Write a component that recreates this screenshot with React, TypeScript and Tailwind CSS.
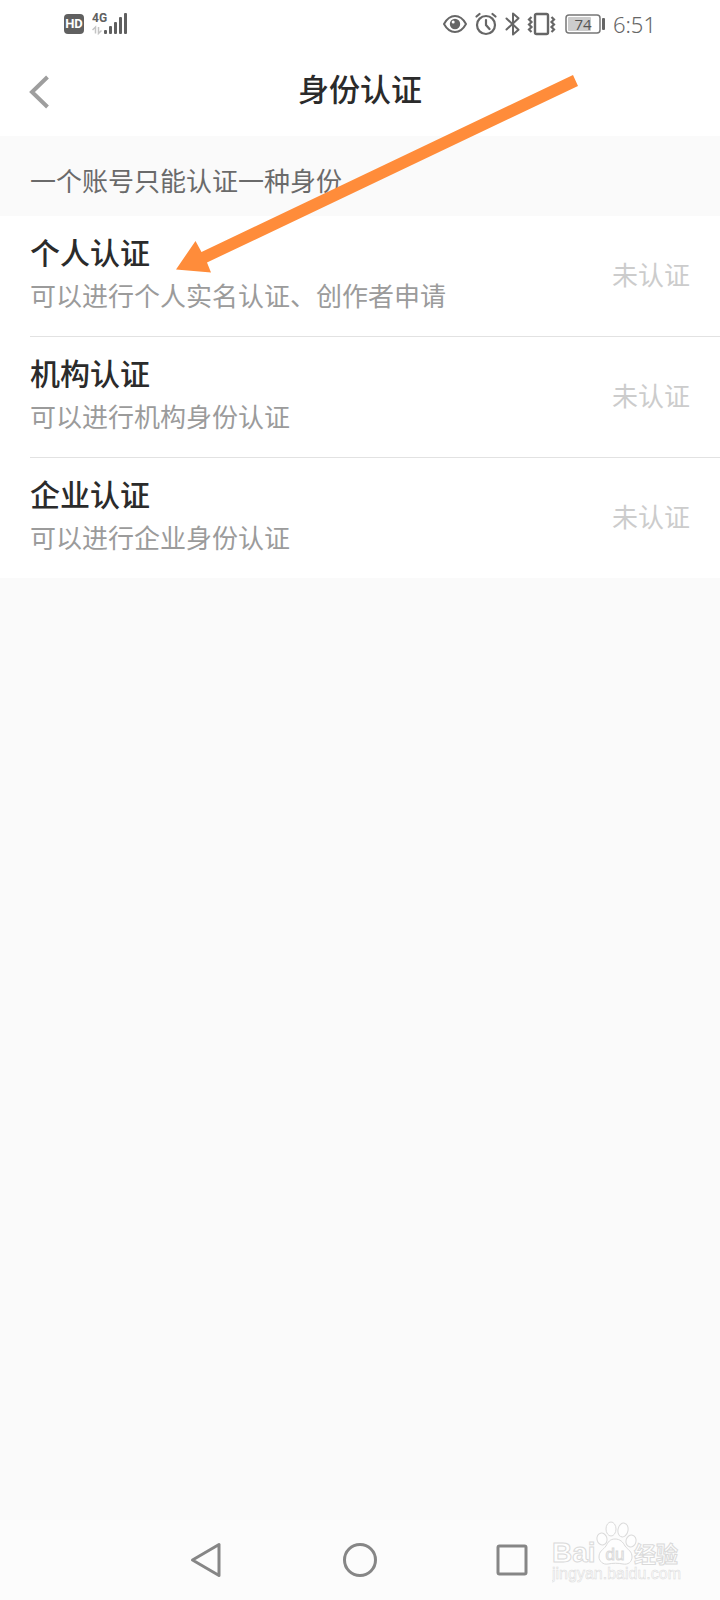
const items = [
    { title: "个人认证", desc: "可以进行个人实名认证、创作者申请", status: "未认证" },
    { title: "机构认证", desc: "可以进行机构身份认证", status: "未认证" },
    { title: "企业认证", desc: "可以进行企业身份认证", status: "未认证" },
];

const StatusBar = () => {
    return(
        <div className="h-12 px-16 flex items-center justify-between bg-white text-[#666666]">
            {/**Network */}
            <div className="flex items-center gap-2">
                <span className="w-5 h-5 rounded-sm bg-[#606060] text-white text-[13px] font-bold font-['Roboto',sans-serif] flex items-center justify-center">HD</span>
                <svg width="36" height="32" viewBox="0 -4 36 32" fill="#606060">
                    <text x="0" y="10" fontSize="12" fontWeight="700" fontFamily="'Roboto', sans-serif">4G</text>
                    <path d="M3.500 21.500v-6.500l-3 3M6.500 15v6.500l3-3" fill="none" stroke="#c4c4c4" strokeWidth="1.500" />
                    <rect x="12" y="18" width="3" height="4" rx="1" />
                    <rect x="17" y="14" width="3" height="8" rx="1" />
                    <rect x="22" y="10" width="3" height="12" rx="1" />
                    <rect x="27" y="5" width="3" height="17" rx="1" />
                    <rect x="32" y="1" width="3" height="21" rx="1" />
                </svg>
            </div>

            {/**System icons */}
            <div className="flex items-center gap-2">
                <svg width="24" height="24" viewBox="0 0 24 24" fill="none" stroke="currentColor" strokeWidth="2">
                    <path d="M1 12C4 6.500 8 4 12 4s8 2.500 11 8c-3 5.500-7 8-11 8S4 17.500 1 12z" strokeLinejoin="round" />
                    <circle cx="12" cy="12" r="5.200" fill="currentColor" stroke="none" />
                    <circle cx="10.200" cy="10" r="1.500" fill="#ffffff" stroke="none" />
                </svg>
                <svg width="22" height="24" viewBox="0 0 22 24" fill="none" stroke="currentColor" strokeWidth="2.200" strokeLinecap="round">
                    <circle cx="11" cy="13" r="9" />
                    <path d="M11 8v5l3.500 4M1.500 4.500l3-2.500M20.500 4.500l-3-2.500" />
                </svg>
                <svg width="16" height="24" viewBox="0 0 16 24" fill="none" stroke="currentColor" strokeWidth="2">
                    <path d="M1.500 6.500l12 11.300L8 22.500V1.500l5.500 4.700L1.500 17.500" strokeLinejoin="round" strokeLinecap="round" />
                </svg>
                <svg width="28" height="24" viewBox="1 0 28 24" fill="none" stroke="currentColor" strokeWidth="2.400" className="overflow-visible">
                    <rect x="7" y="2" width="13" height="20" rx="1.500" />
                    <path d="M3.500 5L1 7.500 3.500 10 1 12.500 3.500 15 1 17.500 3.500 20" strokeWidth="2.200" />
                    <path d="M23.500 5l2.500 2.500-2.500 2.500 2.500 2.500-2.500 2.500 2.500 2.500-2.500 2.500" strokeWidth="2.200" />
                </svg>
                <svg width="40" height="20" viewBox="0 0 40 20">
                    <rect x="1" y="1" width="34" height="18" rx="3" fill="#ffffff" stroke="#777777" strokeWidth="1.500" />
                    <rect x="3" y="3" width="23" height="14" rx="1" fill="#cccccc" />
                    <rect x="37" y="4" width="3" height="12" rx="1" fill="#666666" />
                    <text x="18" y="15.500" fontSize="15" textAnchor="middle" fill="#555555" fontFamily="'Open Sans', sans-serif">74</text>
                </svg>
                <span className="text-[22px] leading-6 font-['Noto_Sans',sans-serif] font-light">6:51</span>
            </div>
        </div>
    )
}

const Arrow = () => {
    return(
        <svg className="absolute left-[176px] top-[74px] pointer-events-none" width="404" height="200" viewBox="0 0 404 200" aria-hidden="true">
            <path d="M0 195.500L19.500 167l6 11L397 1l5 11L31 188.500l4 10z" fill="#ff8c3a" />
        </svg>
    )
}

const Watermark = () => {
    return(
        <svg className="absolute right-9 bottom-3 pointer-events-none" width="132" height="68" viewBox="0 0 132 68" fill="#fefefe" stroke="#dadada">
            <text x="0" y="42" fontSize="28" fontWeight="700" fontFamily="'Liberation Sans', sans-serif">Bai</text>
            <text x="82" y="42" fontSize="22" fontWeight="700" fontFamily="'Noto Sans CJK SC', sans-serif">经验</text>
            {/**Paw */}
            <ellipse cx="50" cy="19" rx="5" ry="6" transform="rotate(-15 50 19)" />
            <ellipse cx="59" cy="9" rx="5" ry="7" />
            <ellipse cx="71" cy="10" rx="5" ry="7" transform="rotate(12 71 10)" />
            <ellipse cx="79" cy="21" rx="5" ry="6" transform="rotate(15 79 21)" />
            <path d="M63 19c5 0 8 3 10 7 3 4 7 5 7 11 0 5-4 8-9 7-5-1-10-1-15 0-5 1-9-3-9-7 0-6 4-7 7-11 2-4 4-7 9-7z" />
            <text x="63" y="40" fontSize="17" textAnchor="middle" fontFamily="'Liberation Sans', sans-serif">du</text>
            <text x="0" y="59" fontSize="16" strokeWidth="0.500" fontFamily="'Liberation Sans', sans-serif">jingyan.baidu.com</text>
        </svg>
    )
}

const App = () => {
    return(
        <div className="relative w-full min-h-screen flex flex-col bg-[#fafafa] font-['Noto_Sans_CJK_SC',sans-serif]">
            <StatusBar />

            {/**Header */}
            <header className="h-[88px] px-7 pb-1 grid grid-cols-[1fr_auto_1fr] items-center bg-white">
                <button type="button" aria-label="返回" className="w-6 pt-1">
                    <svg width="22" height="36" viewBox="0 0 22 36" fill="none" stroke="#9e9e9e" strokeWidth="4">
                        <path d="M19.500 3L4 18l15.500 15" />
                    </svg>
                </button>
                <h1 className="pb-1 text-[31px] leading-10 font-medium text-[#2b2b2b]">身份认证</h1>
            </header>

            <p className="h-20 px-[30px] pt-2 flex items-center text-[26px] leading-9 text-[#6a6a6a]">一个账号只能认证一种身份</p>

            {/**Identity types */}
            <ul className="bg-white">
                {items.map((item, i) => (
                    <li key={item.title} className="pl-[30px]">
                        <a href="#" className={"pr-[30px] pb-1 flex items-center justify-between " + (i < items.length - 1 ? "h-[121px] border-b border-[#e2e2e2]" : "h-[120px]")}>
                            <div>
                                <h2 className="text-[30px] leading-10 font-medium text-[#2b2b2b]">{item.title}</h2>
                                <p className="pt-0.5 text-[26px] leading-11 text-[#9b9b9b]">{item.desc}</p>
                            </div>
                            <span className="text-[26px] leading-9 text-[#cccccc]">{item.status}</span>
                        </a>
                    </li>
                ))}
            </ul>

            {/**Navigation bar */}
            <nav className="mt-auto h-20 flex items-center justify-center gap-[117px] bg-[#fcfcfc]">
                <button type="button" aria-label="后退">
                    <svg width="36" height="36" viewBox="0 0 36 36" fill="none" stroke="#868686" strokeWidth="3" strokeLinejoin="round">
                        <path d="M3.500 18L30 2.500v31z" />
                    </svg>
                </button>
                <button type="button" aria-label="主屏幕">
                    <svg width="36" height="36" viewBox="0 0 36 36" fill="none" stroke="#868686" strokeWidth="3">
                        <circle cx="18" cy="18" r="15.500" />
                    </svg>
                </button>
                <button type="button" aria-label="最近任务">
                    <svg width="36" height="36" viewBox="0 0 36 36" fill="none" stroke="#868686" strokeWidth="3">
                        <rect x="3" y="4" width="28" height="28" rx="1.500" />
                    </svg>
                </button>
            </nav>

            <Arrow />
            <Watermark />
        </div>
    )
}

export default App;
